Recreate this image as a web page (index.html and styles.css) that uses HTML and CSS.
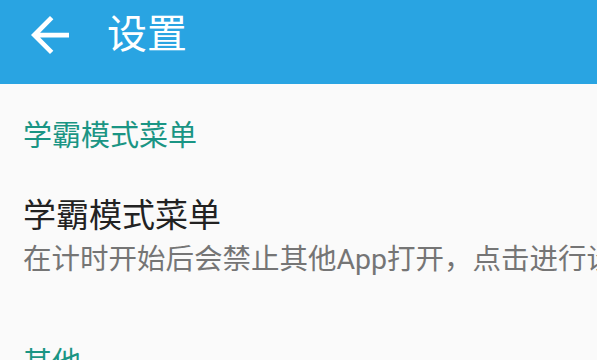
FILE: index.html
```html
<!DOCTYPE html>
<html>
<head>
    <title>设置</title>
    <link rel="stylesheet" href="styles.css">
</head>
<body>
    <div class="toolbar">
        <svg class="back-icon" viewBox="4 4 16 16">
            <path d="M20 11H7.83l5.59-5.59L12 4l-8 8 8 8 1.41-1.41L7.83 13H20v-2z" fill="#fff"/>
        </svg>
        <span class="toolbar-title">设置</span>
    </div>
    <div class="settings">
        <div class="category">学霸模式菜单</div>
        <div class="pref">
            <div class="pref-title">学霸模式菜单</div>
            <div class="pref-summary">在计时开始后会禁止其他App打开，点击进行设置</div>
        </div>
        <div class="category">其他</div>
    </div>
</body>
</html>
```

FILE: styles.css
```css
/* General */
body {
    margin: 0;
    background: #fafafa;
    font-family: Roboto, "Noto Sans CJK SC", sans-serif;
    overflow: hidden;
    width: 597px;
    height: 360px;
}

/* Toolbar */
.toolbar {
    background: #29a4e2;
    height: 84px;
    display: flex;
    align-items: center;
    padding: 0 0 14px 30px;
    box-sizing: border-box;
}

.back-icon {
    width: 40px;
    height: 38px;
}

.toolbar-title {
    color: #fff;
    font-size: 40px;
    line-height: 44px;
    margin-left: 37px;
}

/* Preference list */
.settings {
    padding: 0 0 0 23px;
}

.category {
    color: #1a9584;
    font-size: 29px;
    line-height: 40px;
    padding-top: 64px;
}

.settings .category:first-child {
    padding-top: 32px;
}

.pref {
    padding-top: 40px;
}

.pref-title {
    color: #222;
    font-size: 33px;
    line-height: 40px;
}

.pref-summary {
    color: #757575;
    font-size: 28.5px;
    line-height: 38px;
    margin-top: 5px;
    white-space: nowrap;
}
```
